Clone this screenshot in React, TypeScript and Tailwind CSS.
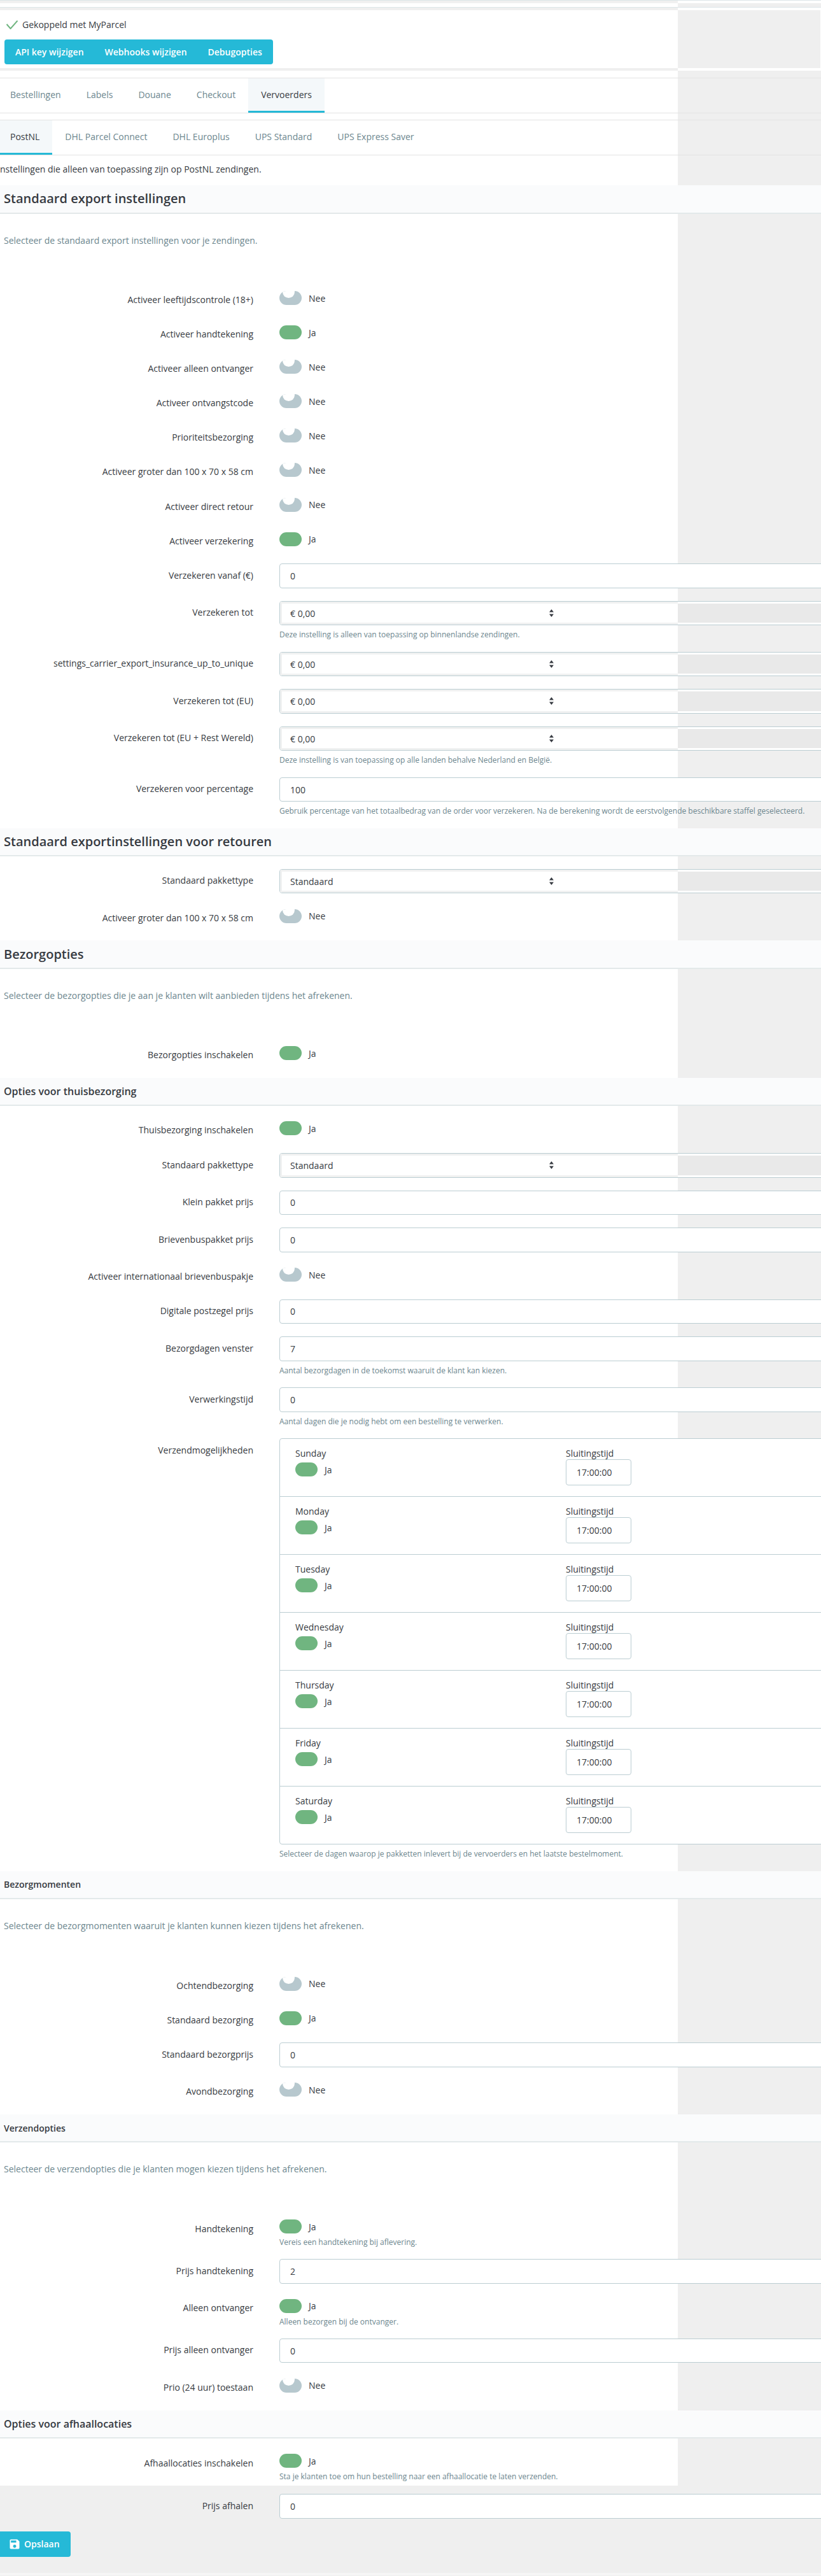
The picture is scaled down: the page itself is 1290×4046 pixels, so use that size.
import type { ReactNode } from "react"

const days = ["Sunday", "Monday", "Tuesday", "Wednesday", "Thursday", "Friday", "Saturday"]
const mainTabs = ["Bestellingen", "Labels", "Douane", "Checkout", "Vervoerders"]
const carrierTabs = ["PostNL", "DHL Parcel Connect", "DHL Europlus", "UPS Standard", "UPS Express Saver"]

function Band({ left, right }: { left: string; right: string }) {
  return (
    <div className="flex">
      <div className={`w-[1065px] shrink-0 ${left}`} />
      <div className={`flex-1 ${right}`} />
    </div>
  )
}

function Tabs({ items, active }: { items: string[]; active: string }) {
  return (
    <div className="border-y border-[#e3e3e3]">
      <div className="flex h-[54px] w-[1065px] overflow-hidden bg-white">
        <div className="-ml-1 flex">
          {items.map((tab) =>
            tab === active ? (
              <div
                key={tab}
                className="flex items-center border-b-[3px] border-[#25b9d7] bg-[#f4f8fa] px-5 text-[14px] text-[#363a41]"
              >
                {tab}
              </div>
            ) : (
              <div key={tab} className="flex items-center px-5 pb-[3px] text-[14px] text-[#6c868e]">
                {tab}
              </div>
            ),
          )}
        </div>
      </div>
    </div>
  )
}

function Heading({ title, size }: { title: string; size: "lg" | "md" | "sm" }) {
  const font = size === "lg" ? "text-[20px]" : size === "md" ? "text-[16px]" : "text-[14px]"
  return (
    <div className="flex h-[44.5px] items-center border-b-2 border-[#e3e9ea] bg-[#fafbfc] pl-1.5">
      <h2 className={`font-semibold text-[#363a41] ${font}`}>{title}</h2>
    </div>
  )
}

function Intro({ text }: { text: string }) {
  return (
    <div className="h-[117px] w-[1065px] bg-white pl-1.5 pt-8 text-[14px] leading-5 text-[#6c868e]">{text}</div>
  )
}

function Switch({ on }: { on: boolean }) {
  return on ? (
    <span className="block h-[22px] w-[35px] shrink-0 rounded-full bg-[#70b580]" />
  ) : (
    <span className="relative block h-[22px] w-[35px] shrink-0 overflow-hidden rounded-full bg-[#b7c8ce]">
      <span className="absolute left-[5px] top-[-8px] h-[19px] w-[19px] rounded-full bg-white" />
    </span>
  )
}

function Row({ label, children }: { label: string; children: ReactNode }) {
  return (
    <div className="flex w-[1065px] pb-5">
      <label className="w-[398px] shrink-0 whitespace-nowrap pt-[8.5px] text-right text-[14px] leading-5 text-[#363a41]">
        {label}
      </label>
      <div className="ml-[41px] w-[880px] shrink-0">{children}</div>
    </div>
  )
}

function Help({ text }: { text: string }) {
  return (
    <p className="h-[21.5px] whitespace-nowrap pt-[5px] text-[12px] leading-5 text-[#6c868e]">{text}</p>
  )
}

function ToggleRow({ label, on, help }: { label: string; on: boolean; help?: string }) {
  return (
    <Row label={label}>
      <div className={help ? "h-[26px] pt-1" : "h-[34.1px] pt-[4.5px]"}>
        <div className="flex items-center gap-[11px] text-[14px] text-[#363a41]">
          <Switch on={on} />
          <span>{on ? "Ja" : "Nee"}</span>
        </div>
      </div>
      {help && (
        <p className="h-5 whitespace-nowrap pt-1 text-[12px] leading-5 text-[#6c868e]">{help}</p>
      )}
    </Row>
  )
}

function InputRow({ label, value, help }: { label: string; value: string; help?: string }) {
  return (
    <Row label={label}>
      <input
        readOnly
        value={value}
        className="block h-[38.5px] w-full rounded-[4px] border border-[#bbcdd2] bg-white pl-4 text-[14px] text-[#363a41]"
      />
      {help && <Help text={help} />}
    </Row>
  )
}

function SelectRow({ label, value, help }: { label: string; value: string; help?: string }) {
  return (
    <Row label={label}>
      <div className="flex h-[38.5px] w-full rounded-[4px] border border-[#bbcdd2] text-[14px] text-[#363a41]">
        <div className="relative flex w-[625px] shrink-0 items-center rounded-l-[3px] border-[3px] border-r-0 border-[#f0f1f1] bg-white pl-[13px]">
          {value}
          <svg className="absolute left-[420px] top-[9px]" width="7" height="12" viewBox="0 0 7 12">
            <path d="M3.5 0L7 4.5H0zM3.5 12L0 7.5h7z" fill="#363a41" />
          </svg>
        </div>
        <div className="flex-1 border-y-[3px] border-white bg-[#e9e9e9]" />
      </div>
      {help && <Help text={help} />}
    </Row>
  )
}

function DayRow({ day, last }: { day: string; last: boolean }) {
  return (
    <div className={last ? "flex h-[90px] pl-[24px] pt-[13px]" : "flex h-[91px] border-b border-[#bbcdd2] pl-[24px] pt-[13px]"}>
      <div className="w-[425px] shrink-0 text-[14px] text-[#363a41]">
        <div className="leading-5">{day}</div>
        <div className="mt-1 flex items-center gap-[11px]">
          <Switch on />
          <span>Ja</span>
        </div>
      </div>
      <div className="text-[14px] text-[#363a41]">
        <div className="h-[19px] leading-5">Sluitingstijd</div>
        <input
          readOnly
          value="17:00:00"
          className="block h-[41px] w-[103px] rounded-[4px] border border-[#bbcdd2] bg-white pl-4"
        />
      </div>
    </div>
  )
}

export default function App() {
  return (
    <div className="h-[4046px] w-[1290px] overflow-hidden bg-[#efefef] font-['Open_Sans',sans-serif]">
      {/* strepen boven de koppeling */}
      <div className="h-px bg-[#dde6e8]" />
      <Band left="h-1 bg-[#f0f0f0]" right="h-1 bg-white" />
      <Band left="h-1.5 bg-white" right="" />
      <div className="h-px bg-[#dde6e8]" />
      <Band left="h-1 bg-[#efefef]" right="h-1 bg-white" />

      {/* koppeling */}
      <div className="flex">
        <div className="h-[91px] w-[1065px] shrink-0 bg-white pl-[10px] pt-[12px]">
          <div className="flex items-center gap-[7px] text-[14px] text-[#363a41]">
            <svg width="18" height="14" viewBox="0 0 18 14" fill="none">
              <path d="M0.5 6L6.5 13L17.5 0.5" stroke="#70b580" strokeWidth="2" />
            </svg>
            <span>Gekoppeld met MyParcel</span>
          </div>
          <div className="-ml-[3px] mt-[13px] inline-flex h-[39px] rounded-[4px] bg-[#25b9d7] text-[14px] font-semibold text-white">
            <span className="flex items-center px-[17px]">API key wijzigen</span>
            <span className="flex items-center px-[16px]">Webhooks wijzigen</span>
            <span className="flex items-center px-[17px]">Debugopties</span>
          </div>
        </div>
        <div className="flex-1 border-r border-white" />
      </div>
      <Band left="h-1 bg-[#efefef]" right="h-1 bg-white" />
      <Band left="h-[11px] bg-white" right="" />

      <Tabs items={mainTabs} active="Vervoerders" />
      <Band left="h-[10px] bg-white" right="" />
      <Tabs items={carrierTabs} active="PostNL" />

      <div className="h-[47px] w-[1065px] bg-white pt-3 text-[14px] leading-5 text-[#363a41]">
        nstellingen die alleen van toepassing zijn op PostNL zendingen.
      </div>

      <Heading title="Standaard export instellingen" size="lg" />
      <Intro text="Selecteer de standaard export instellingen voor je zendingen." />
      <div className="w-[1065px] bg-white">
        <ToggleRow label="Activeer leeftijdscontrole (18+)" on={false} />
        <ToggleRow label="Activeer handtekening" on />
        <ToggleRow label="Activeer alleen ontvanger" on={false} />
        <ToggleRow label="Activeer ontvangstcode" on={false} />
        <ToggleRow label="Prioriteitsbezorging" on={false} />
        <ToggleRow label="Activeer groter dan 100 x 70 x 58 cm" on={false} />
        <ToggleRow label="Activeer direct retour" on={false} />
        <ToggleRow label="Activeer verzekering" on />
        <InputRow label="Verzekeren vanaf (€)" value="0" />
        <SelectRow
          label="Verzekeren tot"
          value="€ 0,00"
          help="Deze instelling is alleen van toepassing op binnenlandse zendingen."
        />
        <SelectRow label="settings_carrier_export_insurance_up_to_unique" value="€ 0,00" />
        <SelectRow label="Verzekeren tot (EU)" value="€ 0,00" />
        <SelectRow
          label="Verzekeren tot (EU + Rest Wereld)"
          value="€ 0,00"
          help="Deze instelling is van toepassing op alle landen behalve Nederland en België."
        />
        <InputRow
          label="Verzekeren voor percentage"
          value="100"
          help="Gebruik percentage van het totaalbedrag van de order voor verzekeren. Na de berekening wordt de eerstvolgende beschikbare staffel geselecteerd."
        />
      </div>

      <Heading title="Standaard exportinstellingen voor retouren" size="lg" />
      <div className="w-[1065px] bg-white pt-[19.5px]">
        <SelectRow label="Standaard pakkettype" value="Standaard" />
        <ToggleRow label="Activeer groter dan 100 x 70 x 58 cm" on={false} />
      </div>

      <Heading title="Bezorgopties" size="lg" />
      <Intro text="Selecteer de bezorgopties die je aan je klanten wilt aanbieden tijdens het afrekenen." />
      <div className="w-[1065px] bg-white">
        <ToggleRow label="Bezorgopties inschakelen" on />
      </div>

      <Heading title="Opties voor thuisbezorging" size="md" />
      <div className="w-[1065px] bg-white pt-[19.5px]">
        <ToggleRow label="Thuisbezorging inschakelen" on />
        <SelectRow label="Standaard pakkettype" value="Standaard" />
        <InputRow label="Klein pakket prijs" value="0" />
        <InputRow label="Brievenbuspakket prijs" value="0" />
        <ToggleRow label="Activeer internationaal brievenbuspakje" on={false} />
        <InputRow label="Digitale postzegel prijs" value="0" />
        <InputRow
          label="Bezorgdagen venster"
          value="7"
          help="Aantal bezorgdagen in de toekomst waaruit de klant kan kiezen."
        />
        <InputRow
          label="Verwerkingstijd"
          value="0"
          help="Aantal dagen die je nodig hebt om een bestelling te verwerken."
        />
        <Row label="Verzendmogelijkheden">
          <div className="rounded-[4px] border border-[#bbcdd2] bg-white">
            {days.map((day, i) => (
              <DayRow key={day} day={day} last={i === days.length - 1} />
            ))}
          </div>
          <Help text="Selecteer de dagen waarop je pakketten inlevert bij de vervoerders en het laatste bestelmoment." />
        </Row>
      </div>

      <Heading title="Bezorgmomenten" size="sm" />
      <Intro text="Selecteer de bezorgmomenten waaruit je klanten kunnen kiezen tijdens het afrekenen." />
      <div className="w-[1065px] bg-white">
        <ToggleRow label="Ochtendbezorging" on={false} />
        <ToggleRow label="Standaard bezorging" on />
        <InputRow label="Standaard bezorgprijs" value="0" />
        <ToggleRow label="Avondbezorging" on={false} />
      </div>

      <Heading title="Verzendopties" size="sm" />
      <Intro text="Selecteer de verzendopties die je klanten mogen kiezen tijdens het afrekenen." />
      <div className="w-[1065px] bg-white">
        <ToggleRow label="Handtekening" on help="Vereis een handtekening bij aflevering." />
        <InputRow label="Prijs handtekening" value="2" />
        <ToggleRow label="Alleen ontvanger" on help="Alleen bezorgen bij de ontvanger." />
        <InputRow label="Prijs alleen ontvanger" value="0" />
        <ToggleRow label="Prio (24 uur) toestaan" on={false} />
      </div>

      <Heading title="Opties voor afhaallocaties" size="md" />
      <div className="h-[74.4px] w-[1065px] bg-white pt-5">
        <ToggleRow
          label="Afhaallocaties inschakelen"
          on
          help="Sta je klanten toe om hun bestelling naar een afhaallocatie te laten verzenden."
        />
      </div>
      <div className="pt-[13px]">
        <InputRow label="Prijs afhalen" value="0" />
      </div>

      <button className="flex h-10 w-[111px] items-center rounded-r-[4px] bg-[#25b9d7] pl-[13px] text-[14px] font-semibold text-white">
        <svg width="20" height="20" viewBox="0 0 24 24" fill="#ffffff">
          <path d="M17 3H5c-1.11 0-2 .9-2 2v14c0 1.1.89 2 2 2h14c1.1 0 2-.9 2-2V7l-4-4zm-5 16c-1.66 0-3-1.34-3-3s1.34-3 3-3 3 1.34 3 3-1.34 3-3 3zm3-10H5V5h10v4z" />
        </svg>
        <span className="ml-[5px]">Opslaan</span>
      </button>
      <div className="mt-[25px] h-1 bg-[#f6f6f6]" />
    </div>
  )
}
